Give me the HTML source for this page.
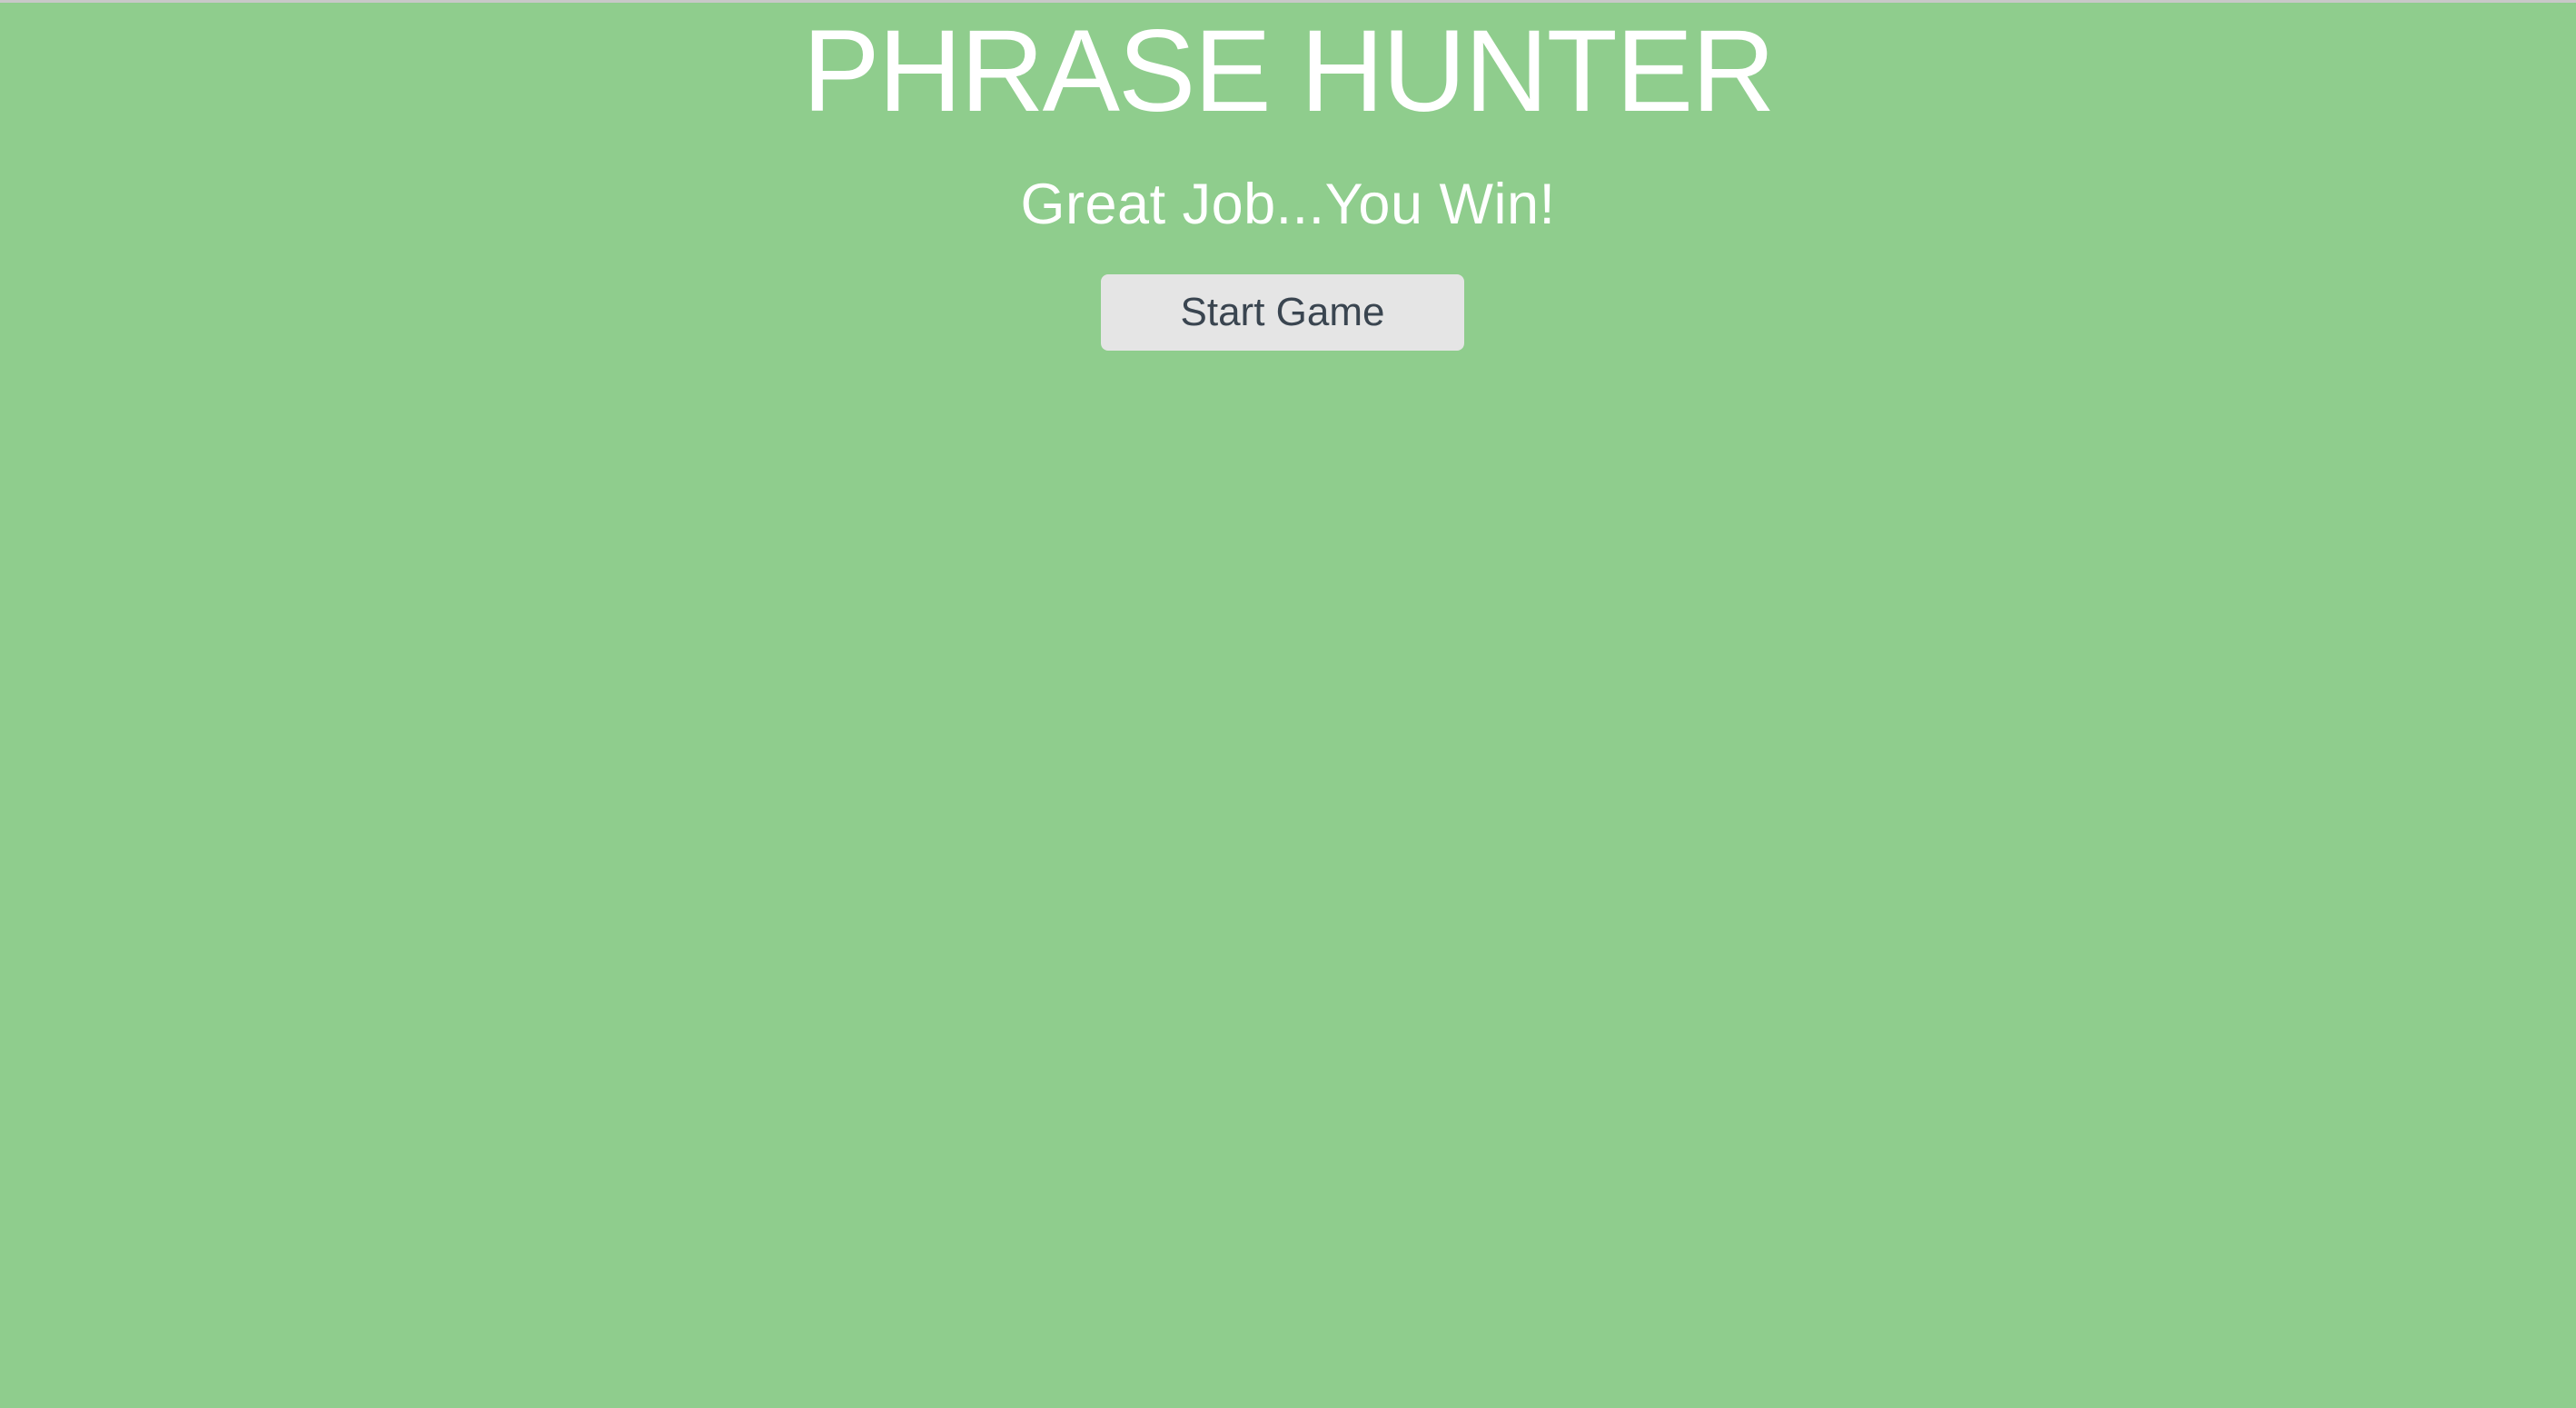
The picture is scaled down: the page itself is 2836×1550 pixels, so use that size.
<!DOCTYPE html>
<html><head><style>
html,body{margin:0;padding:0;}
body{width:2836px;height:1550px;background:#8fcd8d;border-top:3px solid #c8c8c8;box-sizing:border-box;font-family:"Liberation Sans",sans-serif;position:relative;overflow:hidden;}
.t{position:absolute;left:0;width:2836px;text-align:center;color:#fff;white-space:nowrap;}
h1{margin:0;font-weight:normal;font-size:128px;line-height:1;top:12px;letter-spacing:-2px;}
h2{margin:0;font-weight:normal;font-size:63px;line-height:1;top:191px;letter-spacing:0.5px;}
.btn{position:absolute;left:1212px;top:299px;width:400px;height:84px;background:#e5e5e5;border-radius:8px;color:#3a4550;font-size:44px;line-height:84px;text-align:center;}
</style></head><body>
<h1 class="t">PHRASE HUNTER</h1>
<h2 class="t">Great Job...You Win!</h2>
<div class="btn">Start Game</div>
</body></html>
